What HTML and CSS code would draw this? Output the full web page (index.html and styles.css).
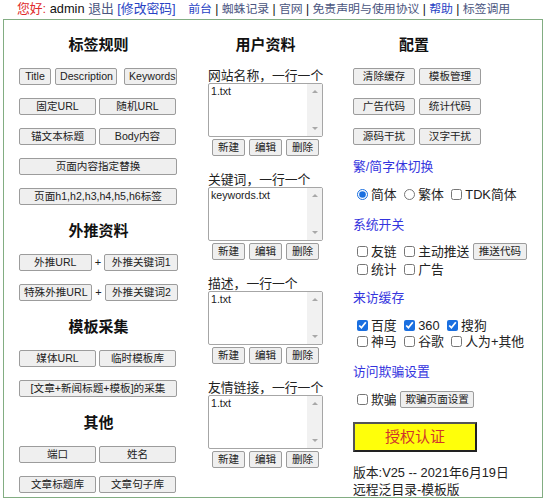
FILE: index.html
```html
<!DOCTYPE html>
<html lang="zh-CN">
<head>
<meta charset="utf-8">
<title>远程泛目录</title>
<link rel="stylesheet" href="styles.css">
</head>
<body>
<div class="topbar">
  <span class="hello">您好:</span> admin <a class="lk dim">退出</a> <a class="lk">[修改密码]</a>
  <span class="nav"><a class="lk">前台</a> | <a class="lk dim">蜘蛛记录</a> | <a class="lk dim">官网</a> | <a class="lk dim">免责声明与使用协议</a> | <a class="lk">帮助</a> | <a class="lk dim">标签调用</a></span>
</div>
<div class="box">
  <div class="col">
    <h3 class="hd">标签规则</h3>
    <div class="row"><button class="btn w-title">Title</button><button class="btn w-desc">Description</button><button class="btn w-kw">Keywords</button></div>
    <div class="row"><button class="btn half">固定URL</button><button class="btn half">随机URL</button></div>
    <div class="row"><button class="btn half">锚文本标题</button><button class="btn half">Body内容</button></div>
    <div class="row"><button class="btn full">页面内容指定替换</button></div>
    <div class="row"><button class="btn full">页面h1,h2,h3,h4,h5,h6标签</button></div>
    <h3 class="hd hd-next">外推资料</h3>
    <div class="row"><button class="btn push">外推URL</button><span class="plus">+</span><button class="btn push2">外推关键词1</button></div>
    <div class="row"><button class="btn push">特殊外推URL</button><span class="plus">+</span><button class="btn push2">外推关键词2</button></div>
    <h3 class="hd hd-next">模板采集</h3>
    <div class="row"><button class="btn half">媒体URL</button><button class="btn half">临时模板库</button></div>
    <div class="row"><button class="btn full">[文章+新闻标题+模板]的采集</button></div>
    <h3 class="hd hd-next">其他</h3>
    <div class="row"><button class="btn half">端口</button><button class="btn half">姓名</button></div>
    <div class="row"><button class="btn half">文章标题库</button><button class="btn half">文章句子库</button></div>
  </div>

  <div class="col">
    <h3 class="hd">用户资料</h3>
    <div class="fblock">
      <div class="flabel">网站名称，一行一个</div>
      <div class="tawrap"><textarea class="ta">1.txt</textarea><span class="sb"></span></div>
      <div class="fbtns"><button class="btn sm">新建</button><button class="btn sm">编辑</button><button class="btn sm">删除</button></div>
    </div>
    <div class="fblock">
      <div class="flabel">关键词，一行一个</div>
      <div class="tawrap"><textarea class="ta">keywords.txt</textarea><span class="sb"></span></div>
      <div class="fbtns"><button class="btn sm">新建</button><button class="btn sm">编辑</button><button class="btn sm">删除</button></div>
    </div>
    <div class="fblock">
      <div class="flabel">描述，一行一个</div>
      <div class="tawrap"><textarea class="ta">1.txt</textarea><span class="sb"></span></div>
      <div class="fbtns"><button class="btn sm">新建</button><button class="btn sm">编辑</button><button class="btn sm">删除</button></div>
    </div>
    <div class="fblock">
      <div class="flabel">友情链接，一行一个</div>
      <div class="tawrap"><textarea class="ta">1.txt</textarea><span class="sb"></span></div>
      <div class="fbtns"><button class="btn sm">新建</button><button class="btn sm">编辑</button><button class="btn sm">删除</button></div>
    </div>
  </div>

  <div class="col">
    <h3 class="hd hd3">配置</h3>
    <div class="row"><button class="btn c3">清除缓存</button><button class="btn c3">模板管理</button></div>
    <div class="row"><button class="btn c3">广告代码</button><button class="btn c3">统计代码</button></div>
    <div class="row"><button class="btn c3">源码干扰</button><button class="btn c3">汉字干扰</button></div>
    <div class="blue">繁/简字体切换</div>
    <div class="opt opt-radio"><label><input type="radio" name="zt" checked>简体</label> <label><input type="radio" name="zt">繁体</label> <label><input type="checkbox">TDK简体</label></div>
    <div class="blue blue-2">系统开关</div>
    <div class="opt opt-sys"><label><input type="checkbox">友链</label> <label><input type="checkbox">主动推送</label> <button class="btn tui">推送代码</button><br><label><input type="checkbox">统计</label> <label><input type="checkbox">广告</label></div>
    <div class="blue blue-3">来访缓存</div>
    <div class="opt opt-cache"><label><input type="checkbox" checked>百度</label> <label><input type="checkbox" checked>360</label> <label><input type="checkbox" checked>搜狗</label><br><label><input type="checkbox">神马</label> <label><input type="checkbox">谷歌</label> <label><input type="checkbox">人为+其他</label></div>
    <div class="blue blue-4">访问欺骗设置</div>
    <div class="opt opt-cheat"><label><input type="checkbox">欺骗</label> <button class="btn cheat">欺骗页面设置</button></div>
    <button class="auth">授权认证</button>
    <div class="ver">版本:V25 -- 2021年6月19日<br>远程泛目录-模板版</div>
  </div>
</div>
</body>
</html>
```
FILE: styles.css
```css
html, body {
  margin: 0;
  padding: 0;
  background: #fff;
}
body {
  font-family: "Liberation Sans", "Noto Sans CJK SC", sans-serif;
  font-size: 12.8px;
  color: #222;
}
.topbar {
  height: 19px;
  line-height: 17px;
  padding-left: 17px;
  white-space: nowrap;
  color: #111;
}
.hello { color: #e02b2b; }
.lk { color: #2742c4; text-decoration: none; }
.lk.dim { color: #4a5580; }
.nav { margin-left: 9px; font-size: 11.9px; }

.box {
  margin-left: 3px;
  width: 540px;
  height: 479px;
  box-sizing: border-box;
  border: 1px solid #82ad82;
  padding: 15px 0 0 15px;
  display: grid;
  grid-template-columns: 159px 115px 1fr;
  column-gap: 30px;
  align-items: start;
}
.col { display: flex; flex-direction: column; }

.hd {
  margin: 0 0 13px;
  font-size: 15px;
  line-height: 20px;
  font-weight: bold;
  text-align: center;
  color: #111;
}
.hd-next { margin-top: 3px; }
.hd3 { width: 122px; }

.row {
  display: flex;
  gap: 3px;
  height: 17px;
  margin-bottom: 13px;
  align-items: center;
}
.btn {
  height: 17px;
  padding: 0 4px;
  box-sizing: border-box;
  font-family: "Liberation Sans", "Noto Sans CJK SC", sans-serif;
  font-size: 10.6px;
  line-height: 15px;
  color: #222;
  background: #efefef;
  border: 1px solid #9c9c9c;
  border-radius: 2px;
  white-space: nowrap;
}
.w-title { width: 32px; }
.w-desc { width: 62px; margin-left: 1px; }
.w-kw { width: 53px; margin-left: 4px; }
.half { width: 77px; }
.full { width: 158px; }
.push { width: 73px; }
.push2 { width: 74px; }
.plus {
  width: 7px;
  text-align: center;
  font-size: 11px;
  line-height: 17px;
}

.fblock { margin-bottom: 16px; }
.flabel {
  line-height: 15px;
  color: #222;
  white-space: nowrap;
}
.tawrap {
  position: relative;
  width: 115px;
  height: 54px;
}
.ta {
  display: block;
  width: 115px;
  height: 54px;
  box-sizing: border-box;
  margin: 0;
  padding: 1px 17px 1px 2px;
  border: 1px solid #a6a6a6;
  border-radius: 2px;
  font-family: "Liberation Sans", "Noto Sans CJK SC", sans-serif;
  font-size: 10.6px;
  line-height: 12px;
  color: #222;
  background: #fff;
  resize: none;
  overflow: hidden;
}
.sb {
  position: absolute;
  top: 1px;
  right: 1px;
  bottom: 1px;
  width: 15px;
  background: #f1f1f1;
}
.sb::before,
.sb::after {
  content: "";
  position: absolute;
  left: 5px;
  width: 0;
  height: 0;
  border-left: 3px solid transparent;
  border-right: 3px solid transparent;
}
.sb::before {
  top: 6px;
  border-bottom: 3px solid #a8a8a8;
}
.sb::after {
  bottom: 6px;
  border-top: 3px solid #a8a8a8;
}
.fbtns {
  display: flex;
  gap: 4px;
  margin-top: 2px;
  padding-left: 4px;
}
.sm { width: 33px; padding: 0; }

.c3 { width: 62px; }
.col .row:has(.c3) { gap: 4px; }

.blue {
  color: #3434de;
  line-height: 18px;
  margin-top: 0;
}
.blue-2 { margin-top: 12px; }
.blue-3 { margin-top: 10px; }
.blue-4 { margin-top: 13px; }

.opt { white-space: nowrap; color: #222; }
.opt label { white-space: nowrap; }
.opt input {
  width: 11px;
  height: 11px;
  margin: 0 3px 0 4px;
  vertical-align: -1px;
  accent-color: #1a6fe0;
}
.opt-radio { line-height: 18px; margin-top: 10px; }
.opt-sys { line-height: 18px; margin-top: 9px; }
.opt-cache { line-height: 16px; margin-top: 11px; }
.opt-cheat { line-height: 18px; margin-top: 10px; }
.tui { width: 54px; padding: 0; vertical-align: 1px; }
.cheat { width: 74px; padding: 0; vertical-align: 1px; }

.auth {
  margin-top: 13px;
  width: 124px;
  height: 30px;
  box-sizing: border-box;
  background: #ffff0a;
  border: 2px solid;
  border-color: #555 #222 #222 #555;
  color: #d0352c;
  font-family: "Liberation Sans", "Noto Sans CJK SC", sans-serif;
  font-size: 15px;
  line-height: 26px;
  padding: 0;
}
.ver {
  margin-top: 12px;
  line-height: 17px;
  color: #222;
  white-space: nowrap;
}
```
